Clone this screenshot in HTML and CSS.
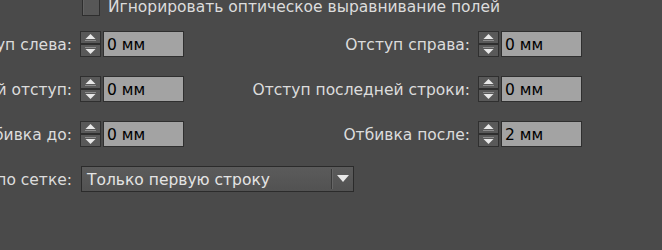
FILE: index.html
```html
<!DOCTYPE html>
<html lang="ru">
<head>
<meta charset="utf-8">
<link rel="stylesheet" href="styles.css">
</head>
<body>
<div class="panel">
  <div class="check-row">
    <span class="checkbox"></span>
    <span class="check-text">Игнорировать оптическое выравнивание полей</span>
  </div>
  <div class="grid">
    <div class="lbl">Отступ слева:</div>
    <div class="field">
      <svg class="spin" width="21" height="26" viewBox="0 0 21 26"><rect width="21" height="26" fill="#2f2f2f"/><rect x="1" y="1" width="19" height="11" fill="#595959"/><rect x="1" y="14" width="19" height="11" fill="#595959"/><polygon points="5.5,8 15.5,8 10.5,3" fill="#e8e8e8"/><rect x="5" y="9" width="11" height="1" fill="#8c8c8c"/><rect x="5" y="16" width="11" height="1" fill="#8c8c8c"/><polygon points="5.5,18 15.5,18 10.5,23" fill="#e8e8e8"/></svg>
      <div class="input">0 мм</div>
    </div>
    <div class="lbl">Отступ справа:</div>
    <div class="field">
      <svg class="spin" width="21" height="26" viewBox="0 0 21 26"><rect width="21" height="26" fill="#2f2f2f"/><rect x="1" y="1" width="19" height="11" fill="#595959"/><rect x="1" y="14" width="19" height="11" fill="#595959"/><polygon points="5.5,8 15.5,8 10.5,3" fill="#e8e8e8"/><rect x="5" y="9" width="11" height="1" fill="#8c8c8c"/><rect x="5" y="16" width="11" height="1" fill="#8c8c8c"/><polygon points="5.5,18 15.5,18 10.5,23" fill="#e8e8e8"/></svg>
      <div class="input">0 мм</div>
    </div>

    <div class="lbl">Первый отступ:</div>
    <div class="field">
      <svg class="spin" width="21" height="26" viewBox="0 0 21 26"><rect width="21" height="26" fill="#2f2f2f"/><rect x="1" y="1" width="19" height="11" fill="#595959"/><rect x="1" y="14" width="19" height="11" fill="#595959"/><polygon points="5.5,8 15.5,8 10.5,3" fill="#e8e8e8"/><rect x="5" y="9" width="11" height="1" fill="#8c8c8c"/><rect x="5" y="16" width="11" height="1" fill="#8c8c8c"/><polygon points="5.5,18 15.5,18 10.5,23" fill="#e8e8e8"/></svg>
      <div class="input">0 мм</div>
    </div>
    <div class="lbl">Отступ последней строки:</div>
    <div class="field">
      <svg class="spin" width="21" height="26" viewBox="0 0 21 26"><rect width="21" height="26" fill="#2f2f2f"/><rect x="1" y="1" width="19" height="11" fill="#595959"/><rect x="1" y="14" width="19" height="11" fill="#595959"/><polygon points="5.5,8 15.5,8 10.5,3" fill="#e8e8e8"/><rect x="5" y="9" width="11" height="1" fill="#8c8c8c"/><rect x="5" y="16" width="11" height="1" fill="#8c8c8c"/><polygon points="5.5,18 15.5,18 10.5,23" fill="#e8e8e8"/></svg>
      <div class="input">0 мм</div>
    </div>

    <div class="lbl">Отбивка до:</div>
    <div class="field">
      <svg class="spin" width="21" height="26" viewBox="0 0 21 26"><rect width="21" height="26" fill="#2f2f2f"/><rect x="1" y="1" width="19" height="11" fill="#595959"/><rect x="1" y="14" width="19" height="11" fill="#595959"/><polygon points="5.5,8 15.5,8 10.5,3" fill="#e8e8e8"/><rect x="5" y="9" width="11" height="1" fill="#8c8c8c"/><rect x="5" y="16" width="11" height="1" fill="#8c8c8c"/><polygon points="5.5,18 15.5,18 10.5,23" fill="#e8e8e8"/></svg>
      <div class="input">0 мм</div>
    </div>
    <div class="lbl">Отбивка после:</div>
    <div class="field">
      <svg class="spin" width="21" height="26" viewBox="0 0 21 26"><rect width="21" height="26" fill="#2f2f2f"/><rect x="1" y="1" width="19" height="11" fill="#595959"/><rect x="1" y="14" width="19" height="11" fill="#595959"/><polygon points="5.5,8 15.5,8 10.5,3" fill="#e8e8e8"/><rect x="5" y="9" width="11" height="1" fill="#8c8c8c"/><rect x="5" y="16" width="11" height="1" fill="#8c8c8c"/><polygon points="5.5,18 15.5,18 10.5,23" fill="#e8e8e8"/></svg>
      <div class="input">2 мм</div>
    </div>

    <div class="lbl">Выравнивание по сетке:</div>
    <div class="dropdown">
      <span class="dd-text">Только первую строку</span>
      <span class="dd-sep"></span>
      <svg class="dd-arrow" width="12" height="8" viewBox="0 0 12 8"><polygon points="0,0 12,0 6,7" fill="#e8e8e8"/></svg>
    </div>
  </div>
</div>
</body>
</html>
```
FILE: styles.css
```css
html, body {
  margin: 0;
  padding: 0;
  background: #4a4a4a;
  overflow: hidden;
}

body {
  width: 662px;
  height: 250px;
  font-family: "DejaVu Sans", Verdana, sans-serif;
  font-size: 15.5px;
  color: #dcdcdc;
}

.panel {
  margin-top: -2px;
}

.check-row {
  display: flex;
  align-items: center;
  gap: 8px;
  margin-left: 82px;
  height: 18px;
}

.checkbox {
  width: 16px;
  height: 16px;
  border: 1px solid #2e2e2e;
  background: #575757;
  box-shadow: inset 1px 1px 0 #626262;
}

.check-text {
  line-height: 18px;
}

.grid {
  display: grid;
  grid-template-columns: 72px 111px 271px 80px;
  column-gap: 8px;
  row-gap: 19px;
  margin-top: 15px;
  align-items: center;
}

.lbl {
  display: flex;
  justify-content: flex-end;
  white-space: nowrap;
  height: 26px;
  align-items: center;
  padding-top: 2px;
  box-sizing: border-box;
}

.field {
  display: flex;
  align-items: center;
  gap: 2px;
  height: 26px;
}

.spin {
  display: block;
  flex: none;
}

.input {
  height: 24px;
  flex: none;
  border: 1px solid #2f2f2f;
  background: #a3a3a3;
  color: #000;
  line-height: 26px;
  padding-left: 3px;
  box-sizing: content-box;
  width: 76px;
  white-space: nowrap;
}

.dropdown {
  grid-column: 2 / span 2;
  width: 271px;
  height: 24px;
  border: 1px solid #2b2b2b;
  background: linear-gradient(#5b5b5b, #525252);
  display: flex;
  align-items: center;
  margin-left: 1px;
}

.dd-text {
  flex: 1;
  padding-left: 5px;
  padding-top: 2px;
  color: #e4e4e4;
  white-space: nowrap;
}

.dd-sep {
  width: 1px;
  height: 20px;
  background: #3a3a3a;
  border-right: 1px solid #666;
  margin-right: 4px;
}

.dd-arrow {
  display: block;
  margin-right: 4px;
}
```
